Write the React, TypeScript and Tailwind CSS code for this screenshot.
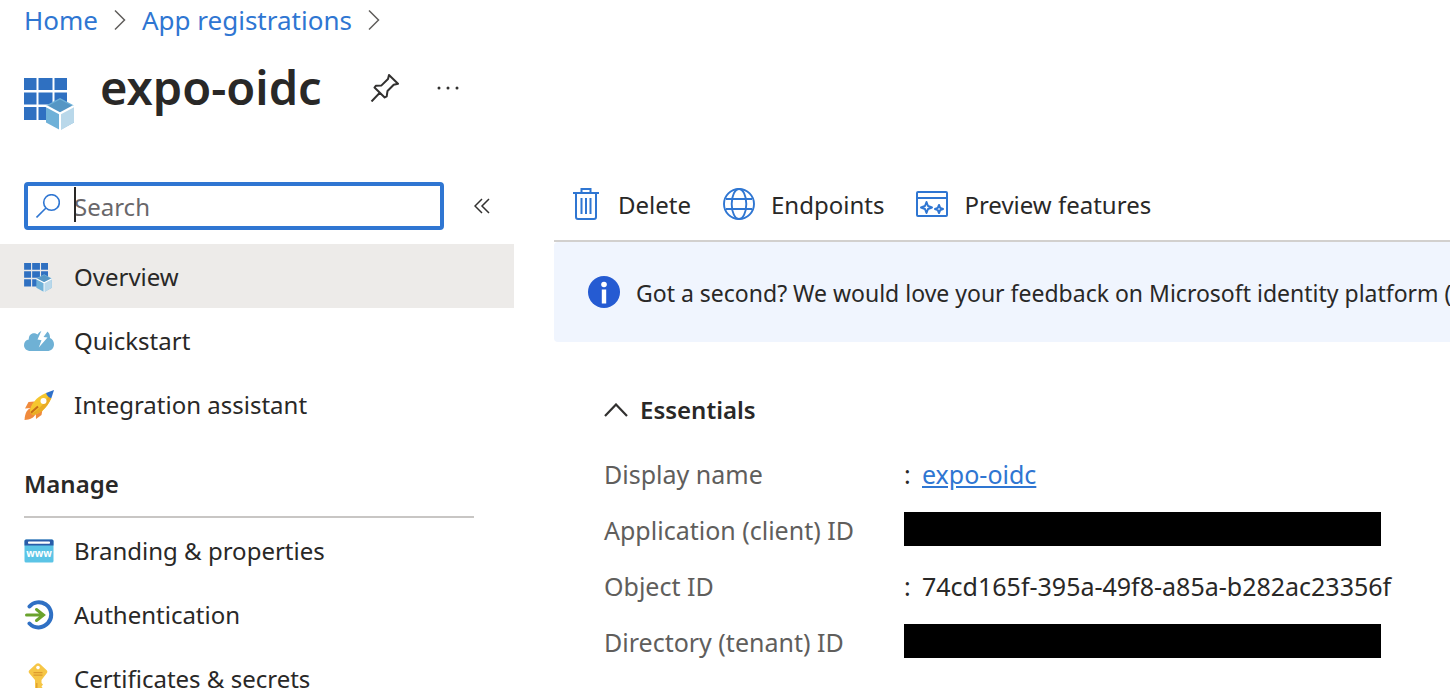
import type { ReactNode } from "react";

function AppGridIcon({ className }: { className: string }) {
  return (
    <svg viewBox="0 0 50 54" className={className} aria-hidden="true">
      <g fill="#2f70c1">
        <path d="M0 2h12.500v12H0zM14.500 2h14v12h-14zM30.500 2H43v12H30.500zM0 16.500h12.500v12H0zM14.500 16.500h14v12h-14zM30.500 16.500H43v12H30.500zM0 31h12.500v13H0zM14.500 31h14v13h-14z" />
      </g>
      <path d="M22 29.500l14-7.500 14 7.500v17l-14 7.500-14-7.500z" fill="#6fb1d8" />
      <path d="M36 23.500l13 7-13 7-13-7z" fill="#5596c4" />
      <path d="M37 37.500l13-7.500v16.500L37 54z" fill="#b9d8ea" />
      <path d="M22 30l14 7.500L50 30M36 37.500V54" fill="none" stroke="#fff" strokeWidth="2" />
    </svg>
  );
}

function CloudBoltIcon() {
  return (
    <svg viewBox="0 0 30 24" className="h-6 w-[30px]" aria-hidden="true">
      <path
        d="M6.500 22C2.800 22 0 19.500 0 16.200c0-3 2.100-5.200 4.800-5.600C4.500 6.500 7 4.200 10 4.200c1.600 0 2.700.6 3.500 1.400C15 3 17.500 1.500 20 1.500c3.800 0 6.300 3.200 6 7.500 2.500.9 4 3.400 4 6.200 0 4-2.900 6.800-6.800 6.800z"
        fill="#6fb1d5"
      />
      <path d="M18 .5L13.500 10.500l4 .8-2.700 7.200L23.500 8.500l-4-.6L25 .5z" fill="#fff" />
    </svg>
  );
}

function RocketIcon() {
  return (
    <svg viewBox="0 0 30 30" className="h-[30px] w-[30px]" aria-hidden="true">
      <path d="M10.500 11.500L4.500 12 1 18.500l6-.6zM18.500 19.500L17.500 25 12 29l-.2-5z" fill="#f08a3c" />
      <path d="M7 18c-3.500 1-6 4-6.500 12C6 29.500 10 28 12 23.500z" fill="#f08a3c" />
      <path d="M6 22.500C5.500 15.500 12 7 22 3l5.300 5.200C23 18 15.500 24.500 8.500 25z" fill="#f5c62e" />
      <path d="M8.500 25C15.500 24.500 23 18 27.300 8.200L24.700 5.700C20 14 13.500 21 7.200 23.700z" fill="#eaac25" />
      <path d="M22 3L30 0l-2.700 8.200C24.800 7.500 23 5.800 22 3z" fill="#2f70c9" />
      <path d="M7 22.700l7-6.200" stroke="#c56b17" strokeWidth="2" />
      <circle cx="19.500" cy="11" r="3" fill="#fff" />
    </svg>
  );
}

function BrowserWwwIcon() {
  return (
    <svg viewBox="0 0 30 24" className="h-6 w-[30px]" aria-hidden="true">
      <rect x="0.500" y="0.500" width="29" height="23" rx="1.500" fill="#5bc4e6" />
      <path d="M.5 6.500V2Q.5.500 2 .5h26q1.500 0 1.500 1.500v4.500z" fill="#2a5ca8" />
      <rect x="4" y="2.500" width="22" height="2.200" rx=".8" fill="#fff" />
      <text x="15" y="17.500" textAnchor="middle" fill="#fff" className="font-['Noto_Sans',sans-serif] text-[10px] font-bold">
        www
      </text>
    </svg>
  );
}

function SignInIcon() {
  return (
    <svg viewBox="0 0 30 30" className="h-[30px] w-[30px]" fill="none" strokeLinecap="round" aria-hidden="true">
      <path d="M5.500 6.500C9.500 1.800 16.500 1 21.500 4.200c6.500 4.500 7.500 13 2.600 18.700C19 28.700 10.500 29 5.500 23.500" stroke="#2f70c4" strokeWidth="4" />
      <path d="M2.500 15H19M12.500 9.500L19.500 15l-7 5.500" stroke="#6aa32d" strokeWidth="3" />
    </svg>
  );
}

function KeyIcon() {
  return (
    <svg viewBox="0 0 20 32" className="h-8 w-5" aria-hidden="true">
      <path
        d="M8.300.8q1.700-1.300 3.400 0l7 6.500q1.300 1.400 0 3L13.500 17v3l1.500 1.500-1.500 2 1.500 2-1.500 2L10 31l-3-3.500V17L1.300 10.300q-1.300-1.600 0-3z"
        fill="#f6c646"
      />
      <circle cx="10" cy="4.600" r="1.800" fill="#fff" />
      <path d="M5.500 9.700h9M5.500 12.200h9M8.800 20v8" stroke="#dd9a2e" strokeWidth="1.200" />
    </svg>
  );
}

function NavItem({ icon, label, active = false }: { icon: ReactNode; label: string; active?: boolean }) {
  return (
    <li>
      <a
        href="#"
        aria-current={active ? "page" : undefined}
        className={
          active
            ? "flex h-16 items-center bg-[#edebe9] pt-0.5 pl-6"
            : "flex h-16 items-center pt-0.5 pl-6"
        }
      >
        <span className="flex w-[50px] items-center">{icon}</span>
        <span className="whitespace-nowrap">{label}</span>
      </a>
    </li>
  );
}

function BreadcrumbChevron() {
  return (
    <svg viewBox="0 0 12 22" className="h-[22px] w-3" fill="none" stroke="#605e5c" strokeWidth="1.500" aria-hidden="true">
      <path d="M1 1.500L10.500 11 1 20.500" />
    </svg>
  );
}

function CommandButton({ icon, label }: { icon: ReactNode; label: string }) {
  return (
    <button type="button" className="flex items-center gap-4 whitespace-nowrap">
      {icon}
      <span className="pt-0.5">{label}</span>
    </button>
  );
}

function Row({ label, children }: { label: string; children: ReactNode }) {
  return (
    <div className="flex h-14 items-center">
      <dt className="w-[300px] shrink-0 text-[#605e5c]">{label}</dt>
      <dd className="flex items-center whitespace-nowrap">{children}</dd>
    </div>
  );
}

function Redacted() {
  return <span className="mb-0.5 block h-[34px] w-[477px] bg-black" aria-label="Hidden value" />;
}

export default function App() {
  return (
    <div className="flex h-screen flex-col overflow-hidden bg-white font-['Noto_Sans',sans-serif] text-[24px] leading-8 text-[#292827]">
      <header className="pl-6">
        <nav aria-label="Breadcrumb" className="flex h-10 items-center gap-4 text-[26px] text-[#2f76d2]">
          <a href="#">Home</a>
          <BreadcrumbChevron />
          <a href="#">App registrations</a>
          <BreadcrumbChevron />
        </nav>
        <div className="flex h-[142px] items-start pt-6">
          <AppGridIcon className="mt-3 h-[54px] w-[50px]" />
          <h1 className="ml-[26px] text-[47px] leading-[46px] font-semibold">expo-oidc</h1>
          <button type="button" aria-label="Pin" className="mt-2 ml-12">
            <svg viewBox="0 0 30 30" className="h-[30px] w-[30px]" fill="none" stroke="#323130" strokeWidth="2" strokeLinejoin="round" aria-hidden="true">
              <path d="M1.500 29.500l9-9.500M19 3l9 8.700-4.300 1L17.500 19l-.8 5.300-2 1.200L4.500 15.500l1.300-1.700 5.700-.4L18 7z" />
            </svg>
          </button>
          <button type="button" aria-label="More actions" className="mt-2 ml-9">
            <svg viewBox="0 0 24 30" className="h-[30px] w-6" fill="#323130" aria-hidden="true">
              <circle cx="3" cy="16" r="1.500" />
              <circle cx="12" cy="16" r="1.500" />
              <circle cx="21" cy="16" r="1.500" />
            </svg>
          </button>
        </div>
      </header>

      <div className="flex min-h-0 flex-1">
        <aside className="w-[514px] shrink-0">
          <div className="mb-[14px] flex items-center pl-6">
            <label className="relative flex h-12 w-[420px] items-center rounded-[4px] border-4 border-[#2f76d2] pl-2">
              <svg viewBox="0 0 24 24" className="h-6 w-6 shrink-0" fill="none" stroke="#2f76d2" strokeWidth="1.600" aria-hidden="true">
                <circle cx="15.500" cy="8.500" r="7.800" />
                <path d="M10 14L.5 23.500" />
              </svg>
              <span className="sr-only">Search</span>
              <input
                type="text"
                placeholder="Search"
                className="ml-[14px] h-10 min-w-0 flex-1 caret-transparent outline-none placeholder:text-[#69676a]"
              />
              <span className="absolute top-px left-[46px] h-[35px] w-0.5 bg-[#292827]" />
            </label>
            <button type="button" aria-label="Collapse menu" className="ml-[30px]">
              <svg viewBox="0 0 16 16" className="h-4 w-4" fill="none" stroke="#323130" strokeWidth="1.500" aria-hidden="true">
                <path d="M8 1L1 8l7 7M15 1L8 8l7 7" />
              </svg>
            </button>
          </div>
          <nav aria-label="Application">
            <ul>
              <NavItem active icon={<AppGridIcon className="h-[30px] w-7" />} label="Overview" />
              <NavItem icon={<CloudBoltIcon />} label="Quickstart" />
              <NavItem icon={<RocketIcon />} label="Integration assistant" />
            </ul>
            <h2 className="mr-10 ml-6 flex h-[82px] items-center border-b-2 border-[#c8c6c4] pt-4 font-semibold">
              Manage
            </h2>
            <ul>
              <NavItem icon={<BrowserWwwIcon />} label="Branding & properties" />
              <NavItem icon={<SignInIcon />} label="Authentication" />
              <NavItem icon={<span className="ml-1"><KeyIcon /></span>} label="Certificates & secrets" />
            </ul>
          </nav>
        </aside>

        <main className="ml-10 min-w-0 flex-1">
          <div role="toolbar" aria-label="Commands" className="flex h-[60px] gap-8 border-b-2 border-[#d2d0ce] pb-[14px] pl-[18px]">
            <CommandButton
              label="Delete"
              icon={
                <svg viewBox="0 0 30 32" className="h-8 w-[30px]" fill="none" stroke="#2f76d2" strokeWidth="2" aria-hidden="true">
                  <path d="M1 5h26M9.500 5V1h9v4M4 5v24q0 2 2 2h16q2 0 2-2V5M9.500 10v16M14 10v16M18.500 10v16" />
                </svg>
              }
            />
            <CommandButton
              label="Endpoints"
              icon={
                <svg viewBox="0 0 32 32" className="h-8 w-8" fill="none" stroke="#2f76d2" strokeWidth="1.900" aria-hidden="true">
                  <circle cx="16" cy="16" r="15" />
                  <ellipse cx="16" cy="16" rx="7.300" ry="15" />
                  <path d="M3 11h26M3 21h26" />
                </svg>
              }
            />
            <CommandButton
              label="Preview features"
              icon={
                <svg viewBox="0 0 32 28" className="h-7 w-8" fill="none" stroke="#2f76d2" strokeWidth="2" strokeLinejoin="round" aria-hidden="true">
                  <rect x="1" y="2" width="30" height="24" rx="1" />
                  <path d="M1 8h30M10.500 12l1.500 4 4 1.500-4 1.500-1.500 4L9 19l-4-1.500L9 16zM23 15l1.200 2.800L27 19l-2.800 1.200L23 23l-1.200-2.800L19 19l2.800-1.200z" />
                </svg>
              }
            />
          </div>

          <div className="flex h-[100px] items-center gap-4 overflow-hidden rounded-l-[4px] bg-[#f0f5fe] pl-[34px]">
            <svg viewBox="0 0 32 32" className="h-8 w-8 shrink-0" aria-hidden="true">
              <circle cx="16" cy="16" r="16" fill="#255bd2" />
              <circle cx="16" cy="8.500" r="2.800" fill="#fff" />
              <path d="M13.800 13.500h4.400v14h-4.400z" fill="#fff" />
            </svg>
            <p className="pt-0.5 text-[23px] whitespace-nowrap">
              Got a second? We would love your feedback on Microsoft identity platform (previously Azure AD for developers).
            </p>
          </div>

          <section className="pt-[52px] pl-[50px]">
            <h2 className="mb-5">
              <button type="button" className="flex items-center gap-3 font-semibold" aria-expanded="true">
                <svg viewBox="0 0 24 14" className="h-[14px] w-6" fill="none" stroke="#323130" strokeWidth="2.200" aria-hidden="true">
                  <path d="M1 13L12 1.500 23 13" />
                </svg>
                Essentials
              </button>
            </h2>
            <dl className="text-[25px]">
              <Row label="Display name">
                <span className="w-[18px]">:</span>
                <a href="#" className="text-[#2f76d2] underline">expo-oidc</a>
              </Row>
              <Row label="Application (client) ID">
                <Redacted />
              </Row>
              <Row label="Object ID">
                <span className="w-[18px]">:</span>
                <span>74cd165f-395a-49f8-a85a-b282ac23356f</span>
              </Row>
              <Row label="Directory (tenant) ID">
                <Redacted />
              </Row>
            </dl>
          </section>
        </main>
      </div>
    </div>
  );
}
